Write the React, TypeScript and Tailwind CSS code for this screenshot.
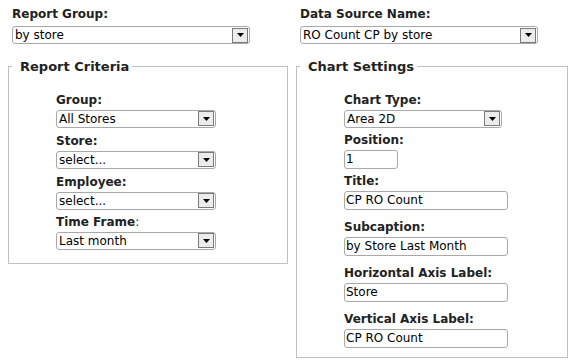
import React from 'react';

const font = { fontFamily: '"DejaVu Sans", Verdana, sans-serif' };

const Arrow = () => (
    <div className="flex justify-center items-center w-[16px] h-[15px] bg-[#ececec] border border-[#7a7a7a] mr-[1px]">
        <svg width="7" height="4" viewBox="0 0 7 4">
            <path d="M0 0h7L3.5 4z" fill="#000" />
        </svg>
    </div>
);

const Select = ({ value, width }: { value: string; width: string }) => (
    <div className={`flex items-center justify-between h-[18px] border border-[#a9a9a9] rounded-[3px] bg-white ${width}`}>
        <span className="pl-[2px] text-[12px] text-black leading-none">{value}</span>
        <Arrow />
    </div>
);

const Input = ({ value, width }: { value: string; width: string }) => (
    <div className={`flex items-center h-[19px] border border-[#a9a9a9] rounded-[3px] bg-white ${width}`}>
        <span className="pl-[1px] text-[12px] text-black leading-none">{value}</span>
    </div>
);

const Label = ({ children }: { children: React.ReactNode }) => (
    <div className="font-bold text-[12px] text-[#222] leading-[16px]">{children}</div>
);

const App = () => {
    return (
        <div className="bg-white w-[579px] h-[361px] overflow-hidden" style={font}>
            <div className="grid grid-cols-[280px_272px] gap-x-[8px] pl-[8px] pt-[6px]">
                {/* Top row */}
                <div className="pl-[4px]">
                    <Label>Report Group:</Label>
                    <div className="mt-[4px]">
                        <Select value="by store" width="w-[238px]" />
                    </div>
                </div>
                <div className="pl-[4px]">
                    <Label>Data Source Name:</Label>
                    <div className="mt-[4px]">
                        <Select value="RO Count CP by store" width="w-[238px]" />
                    </div>
                </div>

                {/* Report Criteria */}
                <fieldset className="self-start mt-[13px] border border-[#c0c0c0] pl-[3px] h-[207px]">
                    <legend className="pl-[8px] pr-[3px] font-bold text-[13px] text-[#222]">Report Criteria</legend>
                    <div className="flex flex-col pl-[44px] pt-[15px]">
                        <Label>Group:</Label>
                        <div className="mt-[2px] mb-[5px]"><Select value="All Stores" width="w-[160px]" /></div>
                        <Label>Store:</Label>
                        <div className="mt-[2px] mb-[5px]"><Select value="select..." width="w-[160px]" /></div>
                        <Label>Employee:</Label>
                        <div className="mt-[2px] mb-[4px]"><Select value="select..." width="w-[160px]" /></div>
                        <Label>Time Frame<span className="font-normal">:</span></Label>
                        <div className="mt-[2px]"><Select value="Last month" width="w-[160px]" /></div>
                    </div>
                </fieldset>

                {/* Chart Settings */}
                <fieldset className="self-start mt-[13px] border border-[#c0c0c0] pl-[3px] h-[301px]">
                    <legend className="pl-[8px] pr-[3px] font-bold text-[13px] text-[#222]">Chart Settings</legend>
                    <div className="flex flex-col pl-[44px] pt-[15px]">
                        <Label>Chart Type:</Label>
                        <div className="mt-[2px] mb-[4px]"><Select value="Area 2D" width="w-[158px]" /></div>
                        <Label>Position:</Label>
                        <div className="mt-[2px] mb-[4px]"><Input value="1" width="w-[54px]" /></div>
                        <Label>Title:</Label>
                        <div className="mt-[2px] mb-[9px]"><Input value="CP RO Count" width="w-[164px]" /></div>
                        <Label>Subcaption:</Label>
                        <div className="mt-[2px] mb-[9px]"><Input value="by Store Last Month" width="w-[164px]" /></div>
                        <Label>Horizontal Axis Label:</Label>
                        <div className="mt-[2px] mb-[9px]"><Input value="Store" width="w-[164px]" /></div>
                        <Label>Vertical Axis Label:</Label>
                        <div className="mt-[2px]"><Input value="CP RO Count" width="w-[164px]" /></div>
                    </div>
                </fieldset>
            </div>
        </div>
    );
};

export default App;
